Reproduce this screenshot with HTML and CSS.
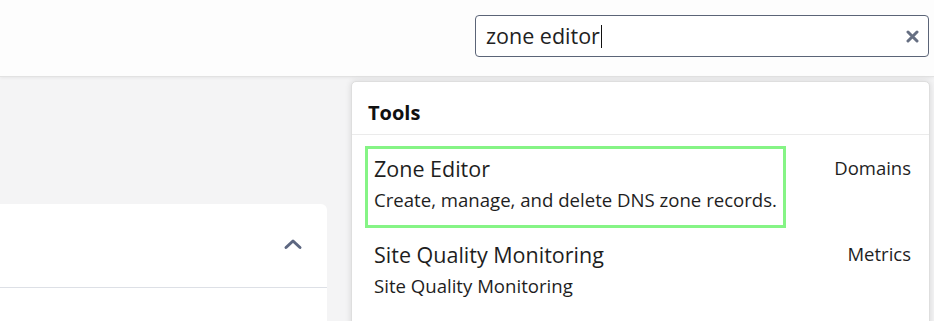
FILE: index.html
```html
<!DOCTYPE html>
<html lang="en">
<head>
<meta charset="utf-8">
<title>Search tools</title>
<link rel="stylesheet" href="styles.css">
</head>
<body>
<header class="topbar">
  <div class="search">
    <div class="search-field" role="searchbox">
      <span class="search-text">zone editor</span><span class="caret"></span>
      <button class="clear" aria-label="Clear search">
        <svg width="13" height="13" viewBox="0 0 13 13"><path d="M2 2 L11 11 M11 2 L2 11" stroke="#666f82" stroke-width="3" stroke-linecap="round"/></svg>
      </button>
    </div>
    <div class="results">
      <div class="results-head">Tools</div>
      <ul class="results-list">
        <li class="result">
          <div class="result-main focused">
            <div class="result-title">Zone Editor</div>
            <div class="result-desc">Create, manage, and delete DNS zone records.</div>
          </div>
          <div class="result-cat">Domains</div>
        </li>
        <li class="result">
          <div class="result-main">
            <div class="result-title">Site Quality Monitoring</div>
            <div class="result-desc">Site Quality Monitoring</div>
          </div>
          <div class="result-cat">Metrics</div>
        </li>
      </ul>
    </div>
  </div>
</header>
<main class="content">
  <section class="card">
    <div class="card-head">
      <svg class="chevron" width="20" height="12" viewBox="0 0 20 12"><path d="M3 9.5 L10 3 L17 9.5" fill="none" stroke="#5d6781" stroke-width="3" stroke-linecap="round" stroke-linejoin="round"/></svg>
    </div>
    <div class="card-body"></div>
  </section>
</main>
</body>
</html>
```

FILE: styles.css
```css
* { box-sizing: border-box; }
html, body { margin: 0; padding: 0; }
body {
  width: 934px;
  height: 321px;
  overflow: hidden;
  background: #f4f4f5;
  font-family: "Open Sans", "DejaVu Sans", sans-serif;
  color: #1c1c1c;
}
.topbar {
  height: 77px;
  background: #fdfdfd;
  border-bottom: 1px solid #e2e2e2;
  box-shadow: 0 1px 3px rgba(0,0,0,0.06);
  display: flex;
  justify-content: flex-end;
  padding: 15px 5px 0 0;
  position: relative;
  z-index: 2;
}
.search {
  position: relative;
  width: 454px;
}
.search-field {
  height: 42px;
  border: 1px solid #5b6477;
  border-radius: 4px;
  background: #fff;
  display: flex;
  align-items: center;
  padding: 0 8px 0 10px;
}
.search-text {
  font-size: 21.5px;
  color: #222;
  line-height: 30px;
}
.caret {
  width: 1px;
  height: 23px;
  background: #111;
  margin-left: 1px;
}
.clear {
  margin-left: auto;
  border: 0;
  background: none;
  padding: 0;
  width: 16px;
  height: 16px;
  display: flex;
  align-items: center;
  justify-content: center;
}
.results {
  position: absolute;
  top: 66px;
  right: -1px;
  width: 579px;
  height: 250px;
  background: #fff;
  border: 1px solid #dedede;
  border-radius: 5px 5px 0 0;
  box-shadow: 0 0 6px rgba(0,0,0,0.12);
  overflow: hidden;
}
.results-head {
  font-weight: 700;
  font-size: 20px;
  line-height: 28px;
  padding: 17px 16px 7px;
  border-bottom: 1px solid #ebebeb;
  color: #111;
}
.results-list {
  list-style: none;
  margin: 0;
  padding: 11px 18px 0 13px;
}
.result {
  display: flex;
  justify-content: space-between;
  align-items: flex-start;
  margin-bottom: 4px;
}
.result-main {
  width: 421px;
  height: 82px;
  border: 3px solid transparent;
  padding: 5px 6px 0 6px;
}
.result-main.focused { border-color: #85f485; }
.result-title {
  font-size: 21.5px;
  line-height: 30px;
  color: #1e1e1e;
}
.result-desc {
  font-size: 18.6px;
  line-height: 28px;
  margin-top: 2px;
  color: #1e1e1e;
}
.result-cat {
  font-size: 18.5px;
  line-height: 26px;
  margin-top: 9px;
  color: #1e1e1e;
}
.content {
  padding-top: 127px;
}
.card {
  width: 327px;
  background: #fff;
  border-radius: 0 6px 0 0;
  height: 120px;
}
.card-head {
  height: 84px;
  border-bottom: 1px solid #dde0e6;
  display: flex;
  align-items: center;
  justify-content: flex-end;
  padding: 0 24px 4px 0;
}
.chevron { display: block; }
```
